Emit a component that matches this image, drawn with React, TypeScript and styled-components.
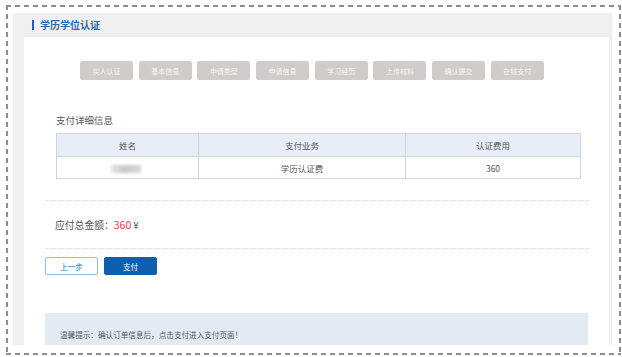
import React from "react";
import styled, { createGlobalStyle } from "styled-components";

const GlobalStyle = createGlobalStyle`
  body {
    margin: 0;
    background: #ffffff;
    font-family: "Noto Sans CJK SC", "Noto Sans", "Liberation Sans", sans-serif;
  }
`;

const dash = "#8d8d8d";

const Frame = styled.div`
  box-sizing: border-box;
  width: 615px;
  height: 350px;
  margin: 5px 0 0 6px;
  padding: 8px 9px 10px 7px;
  background-image:
    repeating-linear-gradient(90deg, ${dash} 0 5px, transparent 5px 9px),
    repeating-linear-gradient(90deg, ${dash} 0 5px, transparent 5px 9px),
    repeating-linear-gradient(180deg, ${dash} 0 5px, transparent 5px 9px),
    repeating-linear-gradient(180deg, ${dash} 0 5px, transparent 5px 9px);
  background-size: 100% 2px, 100% 2px, 2px 100%, 2px 100%;
  background-position: 0 0, 0 100%, 0 0, 100% 0;
  background-repeat: no-repeat;
`;

const Panel = styled.div`
  box-sizing: border-box;
  height: 332px;
  display: flex;
  flex-direction: column;
  overflow: hidden;
  background: #f0f0f0;
  padding: 0 3px 0 11px;
`;

const Header = styled.div`
  height: 24px;
  flex: none;
  display: flex;
  align-items: center;
  padding-left: 8px;
`;

const TitleBar = styled.span`
  width: 2px;
  height: 10px;
  background: #1e63b0;
  margin-right: 6px;
`;

const Title = styled.span`
  font-size: 10px;
  font-weight: 700;
  color: #2a68b0;
  line-height: 14px;
`;

const Content = styled.div`
  flex: 1;
  background: #ffffff;
  padding: 24px 21px 0 21px;
`;

const Steps = styled.div`
  display: flex;
  gap: 5.7px;
  padding-left: 35px;
`;

const Step = styled.div`
  width: 53px;
  height: 19px;
  border-radius: 2px;
  background: #d0cccc;
  color: #f7f5f5;
  font-size: 7px;
  display: flex;
  align-items: center;
  justify-content: center;
`;

const SectionTitle = styled.div`
  margin: 33px 0 0 11px;
  font-size: 9.5px;
  line-height: 14px;
  color: #555555;
`;

const Table = styled.table`
  margin: 6px 11px 0 11px;
  width: 521px;
  border-collapse: collapse;
  table-layout: fixed;
  font-size: 8.5px;
  color: #555555;
`;

const HeadCell = styled.th<{ $w: number }>`
  width: ${(p) => p.$w}px;
  height: 22px;
  padding: 0;
  font-weight: 400;
  background: #e8eef7;
  border: 1px solid #d4d4d4;
  text-align: center;
`;

const Cell = styled.td`
  height: 21px;
  padding: 0;
  border: 1px solid #d4d4d4;
  text-align: center;
`;

const Blurred = styled.span`
  display: inline-block;
  width: 30px;
  height: 8px;
  margin-left: -4px;
  background: linear-gradient(90deg, #e4e4e4, #c8c8c8 45%, #d6d6d6);
  filter: blur(1.5px);
  vertical-align: middle;
`;

const Divider = styled.div`
  margin-top: 21px;
  border-top: 1px dotted #d8d8d8;
`;

const AmountRow = styled.div`
  height: 47px;
  display: flex;
  align-items: center;
  padding-left: 10px;
  border-bottom: 1px dotted #d8d8d8;
  font-size: 9.8px;
  color: #555555;
`;

const Amount = styled.span`
  color: #ec3a4f;
  font-size: 10.5px;
  margin-right: 2px;
`;

const Actions = styled.div`
  display: flex;
  gap: 6px;
  margin-top: 8px;
`;

const Button = styled.button<{ $primary?: boolean }>`
  box-sizing: border-box;
  width: 53px;
  height: 18px;
  padding: 0;
  border-radius: 2px;
  font-family: inherit;
  font-size: 7.5px;
  border: 1px solid ${(p) => (p.$primary ? "#0f5fae" : "#97bce3")};
  background: ${(p) => (p.$primary ? "#0f5fae" : "#ffffff")};
  color: ${(p) => (p.$primary ? "#ffffff" : "#2d6cb4")};
`;

const Tip = styled.div`
  margin-top: 38px;
  height: 40px;
  box-sizing: border-box;
  padding: 16px 0 0 15px;
  background: #e2ebf4;
  font-size: 7.6px;
  line-height: 11px;
  color: #555555;
`;

const steps = [
  "实人认证",
  "基本信息",
  "申请类型",
  "申请信息",
  "学习经历",
  "上传材料",
  "确认提交",
  "在线支付",
];

export default function App() {
  return (
    <>
      <GlobalStyle />
      <Frame>
        <Panel>
          <Header>
            <TitleBar />
            <Title>学历学位认证</Title>
          </Header>
          <Content>
            <Steps>
              {steps.map((s) => (
                <Step key={s}>{s}</Step>
              ))}
            </Steps>
            <SectionTitle>支付详细信息</SectionTitle>
            <Table>
              <thead>
                <tr>
                  <HeadCell $w={141}>姓名</HeadCell>
                  <HeadCell $w={206}>支付业务</HeadCell>
                  <HeadCell $w={174}>认证费用</HeadCell>
                </tr>
              </thead>
              <tbody>
                <tr>
                  <Cell>
                    <Blurred />
                  </Cell>
                  <Cell>学历认证费</Cell>
                  <Cell>360</Cell>
                </tr>
              </tbody>
            </Table>
            <Divider />
            <AmountRow>
              应付总金额：<Amount>360</Amount>¥
            </AmountRow>
            <Actions>
              <Button>上一步</Button>
              <Button $primary>支付</Button>
            </Actions>
            <Tip>温馨提示：确认订单信息后，点击支付进入支付页面！</Tip>
          </Content>
        </Panel>
      </Frame>
    </>
  );
}
